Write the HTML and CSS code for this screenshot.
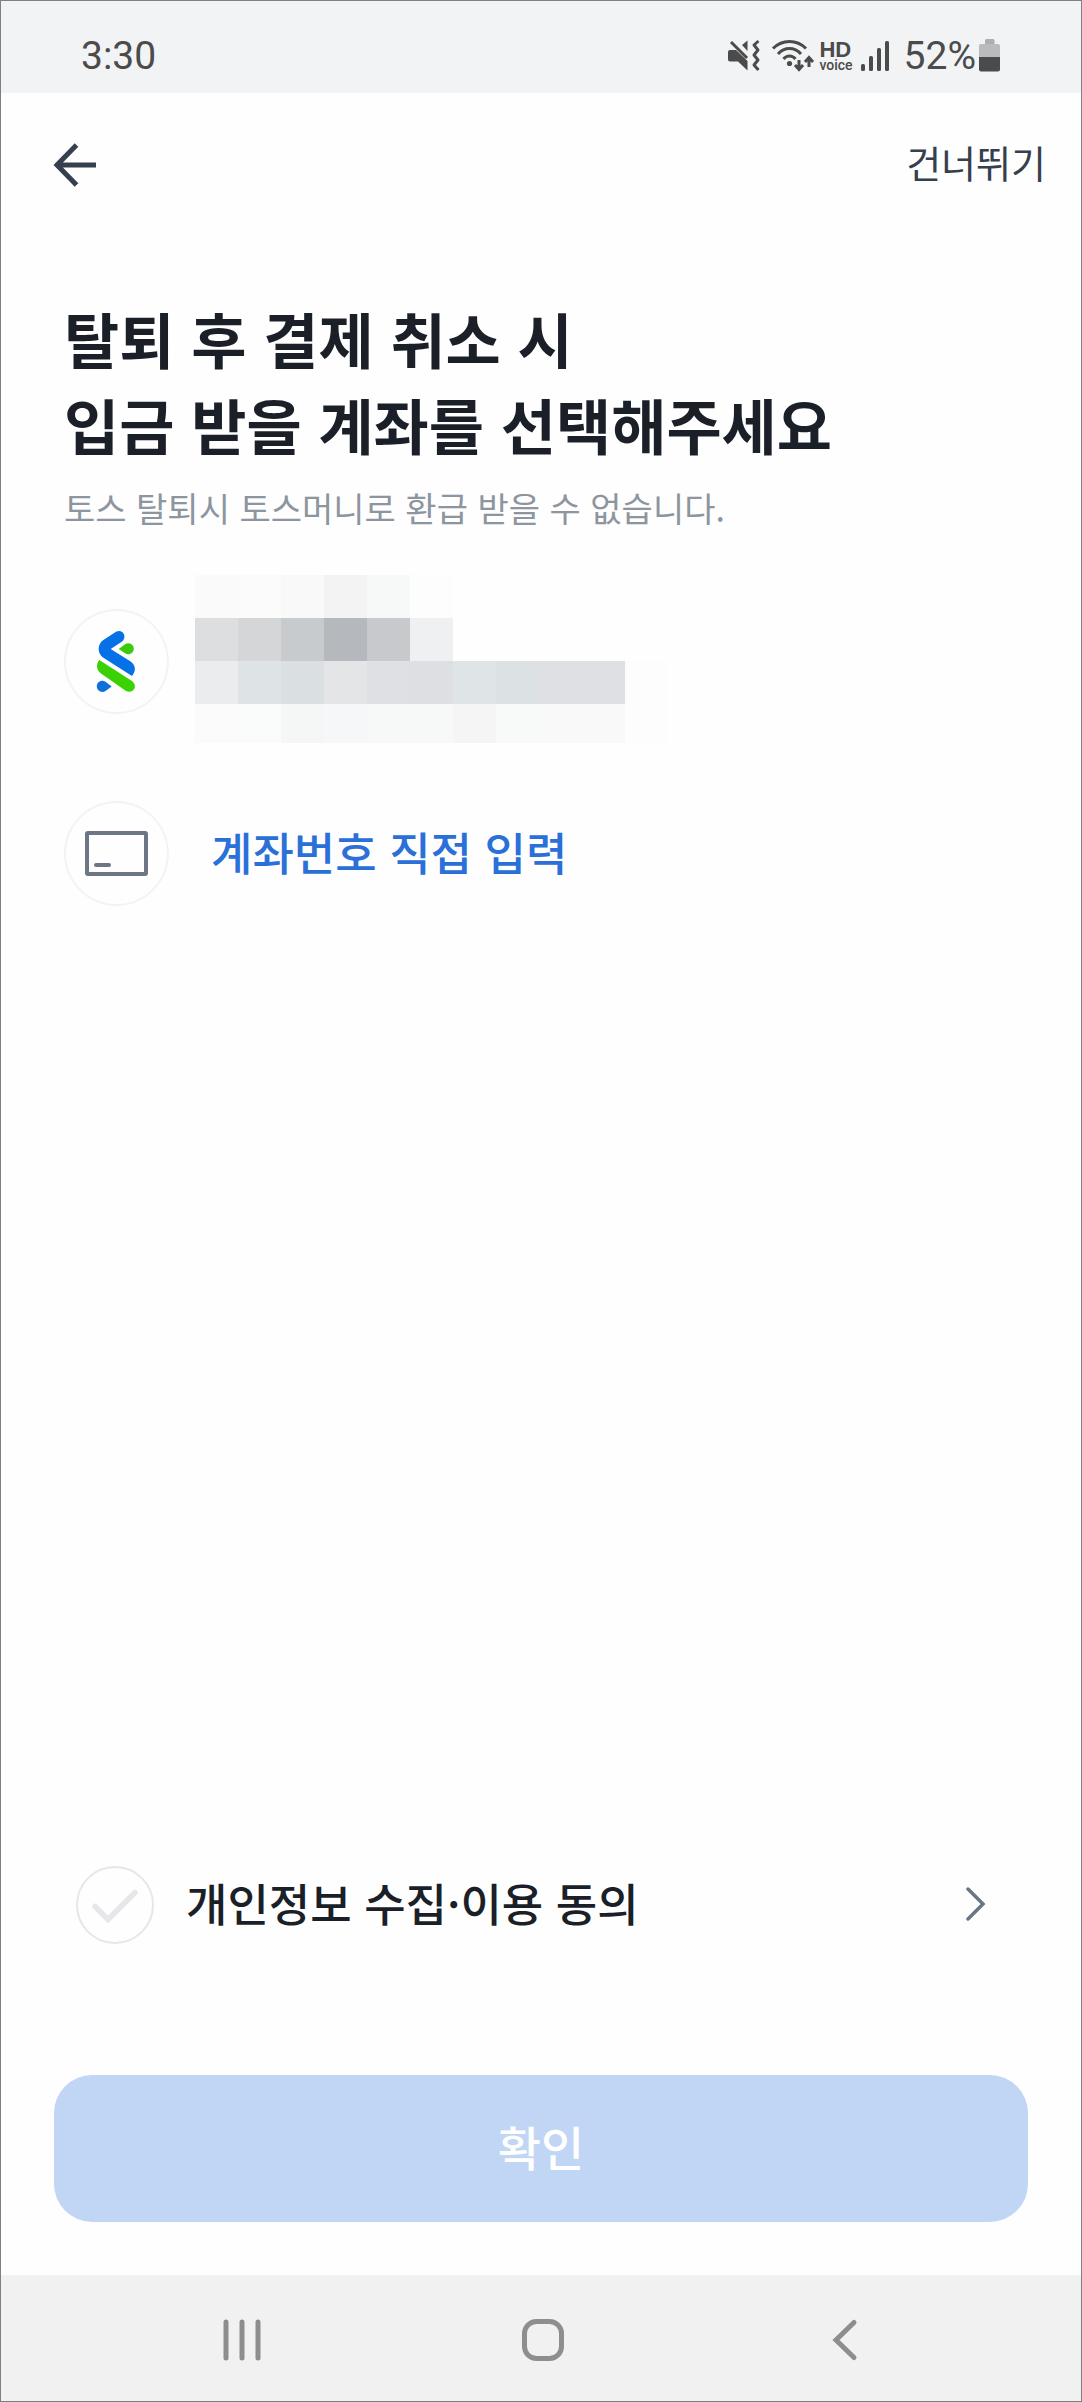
FILE: index.html
```html
<!DOCTYPE html>
<html lang="ko">
<head>
  <meta charset="utf-8">
  <meta name="viewport" content="width=device-width, initial-scale=1">
  <title>계좌 선택</title>
  <link rel="stylesheet" href="styles.css">
</head>
<body>
  <div class="screen">
    <div class="status-bar">
      <span class="status-text">3:30</span>
      <div class="status-icons">
        <svg class="icon-mute" width="34" height="34" viewBox="0 0 34 34" aria-hidden="true">
          <path d="M2 11H9L20.500 22V31.500L11 22.500H3Q1 22.500 1 20.500V13Q1 11 3 11Z" fill="#4a4b4a"/>
          <path d="M15 6L20.500 1.500V12Z" fill="#4a4b4a"/>
          <path d="M4 3L20 19" stroke="#4a4b4a" stroke-width="3" fill="none"/>
          <path d="M31.500 2L27 6L31 11L27 16L31 21L27 26L31.500 31" stroke="#4a4b4a" stroke-width="3" stroke-linejoin="round" fill="none"/>
        </svg>
        <svg class="icon-wifi" width="44" height="34" viewBox="0 0 44 34" aria-hidden="true">
          <g stroke="#4a4b4a" stroke-width="3" fill="none">
            <path d="M2 9.500Q9 2.500 18.500 2.500T35 9.500"/>
            <path d="M7 15Q12 9.500 18.500 9.500T30 15"/>
            <path d="M12.500 20Q15 17 18.500 17T24.500 20"/>
            <path d="M28 21V30M24 26L28 30.500L32 26M38 28V19M34 23L38 18.500L42 23"/>
          </g>
          <circle cx="18.500" cy="24.500" r="2.600" fill="#4a4b4a"/>
        </svg>
        <span class="hd-voice"><b class="hd">HD</b><span class="voice">voice</span></span>
        <svg class="icon-signal" width="28" height="34" viewBox="0 0 28 34" aria-hidden="true">
          <g fill="#4a4b4a">
            <rect x="0" y="25" width="4" height="7" rx="1.500"/>
            <rect x="8" y="17" width="4" height="15" rx="1.500"/>
            <rect x="16" y="9" width="4" height="23" rx="1.500"/>
            <rect x="24" y="2" width="4" height="30" rx="1.500"/>
          </g>
        </svg>
        <span class="status-text">52%</span>
        <svg class="icon-battery" width="22" height="34" viewBox="0 0 22 34" aria-hidden="true">
          <path d="M6 5V1.500Q6 0 7.500 0H14Q15.500 0 15.500 1.500V5Z" fill="#adafae"/>
          <path d="M0 18V7Q0 5 2 5H19Q21 5 21 7V18Z" fill="#babbbc"/>
          <path d="M0 18H21V30.500Q21 32.500 19 32.500H2Q0 32.500 0 30.500Z" fill="#4a4b4a"/>
        </svg>
      </div>
    </div>

    <header class="app-bar">
      <button class="icon-button" type="button" aria-label="뒤로">
        <svg width="44" height="44" viewBox="0 0 44 44" aria-hidden="true">
          <path d="M43 22H4M23.500 2L4 22L23.500 42" fill="none" stroke="#353f4d" stroke-width="5"/>
        </svg>
      </button>
      <a class="skip" href="#">건너뛰기</a>
    </header>

    <main class="content">
      <h1 class="title">탈퇴 후 결제 취소 시<br>입금 받을 계좌를 선택해주세요</h1>
      <p class="subtitle">토스 탈퇴시 토스머니로 환급 받을 수 없습니다.</p>

      <div class="accounts">
        <button class="account account-saved" type="button" aria-label="등록된 계좌">
          <span class="badge">
            <svg width="105" height="105" viewBox="0 0 105 105" aria-hidden="true">
              <path d="M52 22.700C58 19.500 63.500 26.500 58.500 32.200L46.700 40L66.700 52.500C71.500 56 72.500 61.500 68 67L39 48.500C33.500 44.500 33 35.500 39 31.200Z" fill="#0671e6"/>
              <path d="M35.300 51L68 72C74.500 77 69 85.500 62 82L37 64.500C32 61 32 55 35.300 51Z" fill="#3ad204"/>
              <path d="M54.700 40L61 35.300C65 32.500 69.800 35.500 69.800 39.700S65 46.800 61 44.200Z" fill="#3bcb0c"/>
              <path d="M47.700 77.400L41.500 82C37.500 84.500 32.800 81.500 32.800 77.300S37.500 70.300 41.500 72.800Z" fill="#0f70da"/>
            </svg>
          </span>
          <svg class="masked" width="473" height="168" viewBox="0 0 473 168" shape-rendering="crispEdges" aria-hidden="true">
            <rect x="0" y="0" width="43" height="43" fill="#fafafa"/>
            <rect x="43" y="0" width="43" height="43" fill="#fbfbfb"/>
            <rect x="86" y="0" width="43" height="43" fill="#f9f9f9"/>
            <rect x="129" y="0" width="43" height="43" fill="#f3f3f3"/>
            <rect x="172" y="0" width="43" height="43" fill="#f7f9f8"/>
            <rect x="215" y="0" width="43" height="43" fill="#fdfdfd"/>
            <rect x="0" y="43" width="43" height="43" fill="#dddee0"/>
            <rect x="43" y="43" width="43" height="43" fill="#d5d6d8"/>
            <rect x="86" y="43" width="43" height="43" fill="#c7cbcd"/>
            <rect x="129" y="43" width="43" height="43" fill="#b5b9be"/>
            <rect x="172" y="43" width="43" height="43" fill="#c8c9cd"/>
            <rect x="215" y="43" width="43" height="43" fill="#eff0f2"/>
            <rect x="0" y="86" width="43" height="43" fill="#ebecee"/>
            <rect x="43" y="86" width="43" height="43" fill="#dee3e6"/>
            <rect x="86" y="86" width="43" height="43" fill="#dadfe2"/>
            <rect x="129" y="86" width="43" height="43" fill="#e4e5e6"/>
            <rect x="172" y="86" width="43" height="43" fill="#dfe0e4"/>
            <rect x="215" y="86" width="43" height="43" fill="#dddfe3"/>
            <rect x="258" y="86" width="43" height="43" fill="#dfe4e6"/>
            <rect x="301" y="86" width="43" height="43" fill="#dce1e3"/>
            <rect x="344" y="86" width="86" height="43" fill="#dfe0e4"/>
            <rect x="430" y="86" width="43" height="82" fill="#fdfdfd"/>
            <rect x="0" y="129" width="43" height="39" fill="#fbfbfb"/>
            <rect x="43" y="129" width="43" height="39" fill="#fafbfb"/>
            <rect x="86" y="129" width="43" height="39" fill="#f5f7f6"/>
            <rect x="129" y="129" width="43" height="39" fill="#f6f7f9"/>
            <rect x="172" y="129" width="86" height="39" fill="#f7f9f8"/>
            <rect x="258" y="129" width="43" height="39" fill="#f5f5f5"/>
            <rect x="301" y="129" width="43" height="39" fill="#f8faf9"/>
            <rect x="344" y="129" width="86" height="39" fill="#f9f9f9"/>
          </svg>
        </button>

        <button class="account account-manual" type="button">
          <span class="badge">
            <svg width="105" height="105" viewBox="0 0 105 105" aria-hidden="true">
              <rect x="23" y="32" width="59" height="41" rx="1" fill="none" stroke="#6c7684" stroke-width="4"/>
              <path d="M32 64H45" stroke="#6c7684" stroke-width="4" stroke-linecap="round"/>
            </svg>
          </span>
          <span class="row-text">계좌번호 직접 입력</span>
        </button>
      </div>
    </main>

    <footer class="actions">
      <div class="agreement">
        <label class="agree-label">
          <span class="check">
            <input class="check-input" type="checkbox">
            <svg class="check-mark" width="78" height="78" viewBox="0 0 78 78" aria-hidden="true">
              <path d="M19 40.500L32 53.500L59 26.500" fill="none" stroke="#e5e7ea" stroke-width="5.500" stroke-linecap="round"/>
            </svg>
          </span>
          <span class="row-text">개인정보 수집·이용 동의</span>
        </label>
        <button class="icon-button" type="button" aria-label="약관 보기">
          <svg width="20" height="36" viewBox="0 0 20 36" aria-hidden="true">
            <path d="M2 2L17 17L2 32" fill="none" stroke="#6c7683" stroke-width="3.500" stroke-linecap="round"/>
          </svg>
        </button>
      </div>
      <button class="confirm" type="button">확인</button>
    </footer>

    <nav class="system-nav">
      <button class="icon-button" type="button" aria-label="최근 앱">
        <svg width="44" height="44" viewBox="0 0 44 44" aria-hidden="true">
          <path d="M6 4V40M22 4V40M38 4V40" stroke="#8e8e8e" stroke-width="5" stroke-linecap="round"/>
        </svg>
      </button>
      <button class="icon-button" type="button" aria-label="홈">
        <svg width="44" height="44" viewBox="0 0 44 44" aria-hidden="true">
          <rect x="3.500" y="3.500" width="37" height="37" rx="12" fill="none" stroke="#8e8e8e" stroke-width="5"/>
        </svg>
      </button>
      <button class="icon-button" type="button" aria-label="이전">
        <svg width="44" height="44" viewBox="0 0 44 44" aria-hidden="true">
          <path d="M32 4.500L14 22L32 39.500" fill="none" stroke="#8e8e8e" stroke-width="5" stroke-linecap="round"/>
        </svg>
      </button>
    </nav>
  </div>
</body>
</html>
```
FILE: styles.css
```css
* {
  box-sizing: border-box;
}

body {
  margin: 0;
  background: #fefefe;
  font-family: "Noto Sans CJK KR", sans-serif;
  color: #1a1f28;
}

button {
  padding: 0;
  border: 0;
  background: none;
  font: inherit;
  color: inherit;
  cursor: pointer;
}

svg {
  display: block;
  flex: none;
}

.screen {
  display: flex;
  flex-direction: column;
  min-height: 100vh;
  border: 1px solid #807f81;
}

/* Status bar */
.status-bar {
  display: flex;
  align-items: center;
  justify-content: space-between;
  height: 92px;
  padding: 18px 80px 0;
  background: #f2f3f5;
  font-family: Roboto, sans-serif;
  color: #4a4b4a;
}

.status-text {
  font-size: 39px;
  line-height: 44px;
}

.status-icons {
  display: flex;
  align-items: center;
}

.icon-wifi {
  margin-left: 10px;
}

.hd-voice {
  display: flex;
  flex-direction: column;
  margin: 0 8px 0 4px;
}

.hd {
  font-family: "Liberation Sans", sans-serif;
  font-size: 22px;
  line-height: 18px;
}

.voice {
  font-size: 14px;
  font-weight: 500;
  line-height: 12px;
}

.icon-signal {
  margin-right: 15px;
}

.icon-battery {
  margin-left: 3px;
}

/* App bar */
.app-bar {
  display: flex;
  align-items: center;
  justify-content: space-between;
  height: 144px;
  padding: 0 35px 0 52px;
}

.skip {
  padding-bottom: 6px;
  font-size: 38px;
  line-height: 56px;
  color: #353f4d;
  text-decoration: none;
}

/* Content */
.content {
  flex: 1;
  padding: 58px 64px 0 63px;
}

.title {
  margin: 0;
  font-size: 60px;
  font-weight: 700;
  line-height: 86px;
}

.subtitle {
  margin: 15px 0 0;
  font-size: 34px;
  line-height: 52px;
  color: #8d959f;
}

.accounts {
  display: flex;
  flex-direction: column;
  gap: 19px;
  margin-top: 41px;
}

.account {
  display: flex;
  align-items: center;
  height: 173px;
  text-align: left;
}

.account-saved {
  gap: 26px;
}

.account-manual {
  gap: 42px;
  font-size: 45px;
  font-weight: 500;
  color: #2a70d8;
}

.badge {
  display: flex;
  border-radius: 50%;
  box-shadow: inset 0 0 0 2px #f2f3f3;
}

.masked {
  align-self: flex-start;
}

.row-text {
  padding-bottom: 4px;
}

/* Agreement and confirm */
.actions {
  padding: 0 53px 53px;
}

.agreement {
  display: flex;
  align-items: center;
  justify-content: space-between;
  margin-bottom: 131px;
  padding: 0 42px 0 22px;
}

.agree-label {
  display: flex;
  align-items: center;
  gap: 32px;
  font-size: 45px;
  font-weight: 500;
  line-height: 66px;
}

.check {
  display: grid;
}

.check-input,
.check-mark {
  grid-area: 1 / 1;
}

.check-input {
  appearance: none;
  width: 78px;
  height: 78px;
  margin: 0;
  border: 2px solid #e5e7e9;
  border-radius: 50%;
}

.check-mark {
  pointer-events: none;
}

.confirm {
  width: 100%;
  height: 147px;
  padding-bottom: 6px;
  border-radius: 38px;
  background: #c1d6f5;
  font-size: 47px;
  font-weight: 500;
  color: #fff;
}

/* System navigation */
.system-nav {
  display: grid;
  grid-template-columns: repeat(3, 1fr);
  height: 126px;
  padding: 4px 86px 0 90px;
  background: #f1f1f1;
}

.icon-button {
  display: flex;
  align-items: center;
  justify-content: center;
}
```
